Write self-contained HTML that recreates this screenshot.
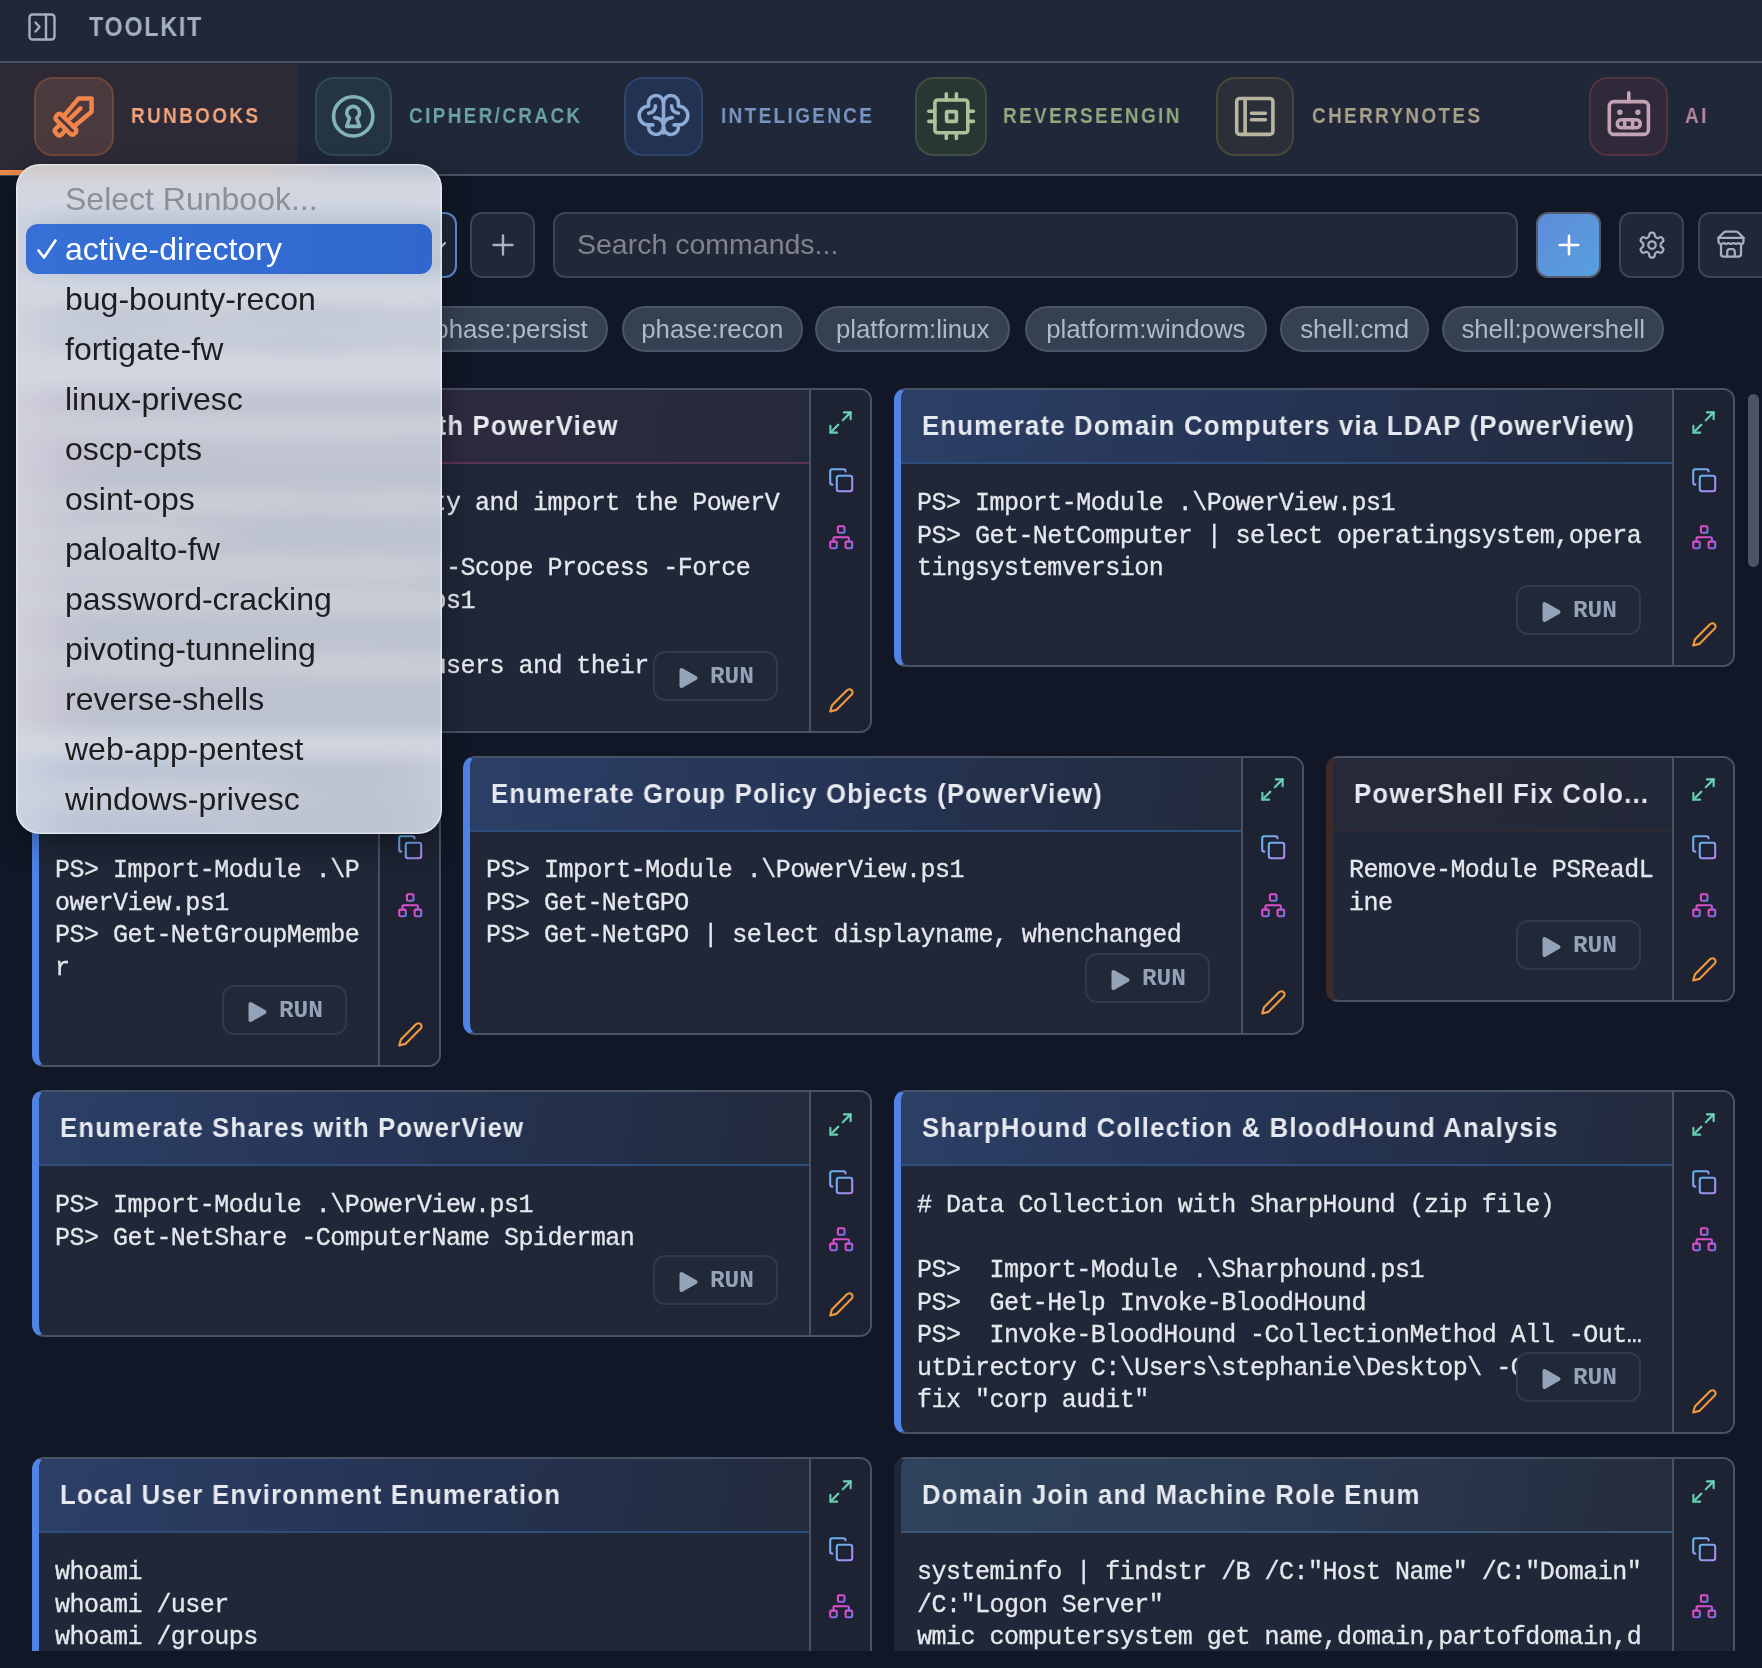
<!DOCTYPE html><html><head><meta charset="utf-8"><style>
*{box-sizing:border-box;margin:0;padding:0}
html,body{width:1762px;height:1668px;overflow:hidden;background:#111726;font-family:"Liberation Sans", sans-serif}
.abs{position:absolute}
#top{position:absolute;left:0;top:0;width:1762px;height:63px;background:#1f2738;border-bottom:2px solid #465366}
#tabs{position:absolute;left:0;top:63px;width:1762px;height:113px;background:#1f2738;border-bottom:2px solid #465366}
.tabtxt{will-change:transform;position:absolute;font-weight:bold;font-size:22px;line-height:26px;white-space:nowrap;letter-spacing:2.75px;transform:scaleX(0.86);transform-origin:0 0}
.ibox{position:absolute;border:2px solid;border-radius:19px}
.ibox svg{position:absolute;left:50%;top:50%;transform:translate(-50%,-50%)}
.btn{position:absolute;top:212px;height:66px;border:2px solid #3a4457;border-radius:12px;background:#1f2738}
.tag{will-change:transform;position:absolute;top:306px;height:46px;border:2px solid #4a5569;border-radius:23px;background:#354053;color:#aeb9ca;font-size:25.8px;line-height:42px;white-space:nowrap;padding:0 18px}
.card{position:absolute;border:2px solid #475265;border-radius:12px;background:#1f2738;overflow:hidden}
.card .hdr{position:absolute;left:0;top:0;height:74px}
.card .sep{position:absolute;left:0;top:72px;height:2px}
.card .ttl{position:absolute;left:21px;top:18px;font-weight:bold;font-size:27.6px;letter-spacing:1.33px;line-height:36px;color:#e6e9ef;white-space:nowrap;will-change:transform;transform:scaleX(0.93);transform-origin:0 0}
.card .act{position:absolute;right:0;top:0;bottom:0;width:61px;background:#1d2332;border-left:2px solid #475265}
.card .act svg{position:absolute}
.code{position:absolute;left:16.2px;top:97.6px;font-family:"Liberation Mono", monospace;font-size:25px;letter-spacing:-0.52px;line-height:32.5px;color:#e4e7ec;-webkit-text-stroke:0.3px #e4e7ec;white-space:pre;will-change:transform}
.run{position:absolute;width:125px;height:50px;border:2px solid #313a4c;border-radius:12px;background:#212838;will-change:transform}
.run svg{position:absolute;left:23px;top:13px}
.run span{position:absolute;left:55px;top:11px;font-family:"Liberation Mono", monospace;font-weight:bold;font-size:24.5px;letter-spacing:-0.1px;line-height:26px;color:#94a3b8}
#dd{position:absolute;left:16px;top:164px;width:426px;height:670px;border-radius:24px;overflow:hidden;box-shadow:0 10px 30px rgba(0,0,0,0.35);background:#c4c8d2}
#dd .bw{position:absolute;left:-16px;top:-164px;width:1762px;height:1668px;filter:url(#ddblur) saturate(1.7)}
#dd .ov{position:absolute;left:0;top:0;width:426px;height:670px;border-radius:24px;background:rgba(212,216,226,0.88);box-shadow:inset 0 0 0 1.5px rgba(255,255,255,0.5)}
#dd .it{will-change:transform;position:absolute;left:49px;font-size:32px;line-height:50px;height:50px;color:#1d1d1f;white-space:nowrap}
#dd .hl{position:absolute;left:10px;top:60px;width:406px;height:50px;border-radius:12px;background:linear-gradient(90deg,#3670d6,#2f67cf)}
</style></head><body><svg width="0" height="0" style="position:absolute"><defs>
<filter id="ddblur" x="-5%" y="-5%" width="110%" height="110%"><feGaussianBlur stdDeviation="30 8" edgeMode="duplicate"/></filter>
<linearGradient id="gTeal" x1="0" y1="1" x2="1" y2="0"><stop offset="0" stop-color="#5ec9a8"/><stop offset="1" stop-color="#6fd3bf"/></linearGradient>
<linearGradient id="gCopy" x1="0" y1="0" x2="1" y2="1"><stop offset="0" stop-color="#5bb8ea"/><stop offset="1" stop-color="#b583f0"/></linearGradient>
<linearGradient id="gNet" x1="0" y1="0" x2="1" y2="1"><stop offset="0" stop-color="#e84fc8"/><stop offset="0.6" stop-color="#c64fd0"/><stop offset="1" stop-color="#4f86f0"/></linearGradient>
<linearGradient id="gPen" x1="0" y1="0" x2="1" y2="1"><stop offset="0" stop-color="#f2a83e"/><stop offset="1" stop-color="#ee8a3c"/></linearGradient>
</defs></svg><div id="top">
<svg class="abs" style="left:27px;top:12px" width="30" height="30" viewBox="0 0 30 30" fill="none" stroke="#a3afc2" stroke-width="2.4" stroke-linecap="round" stroke-linejoin="round"><rect x="2.5" y="2.5" width="25" height="25" rx="3"/><line x1="19" y1="2.5" x2="19" y2="27.5"/><polyline points="8.5,10.5 12.5,15 8.5,19.5"/></svg>
<div class="abs" style="left:89px;top:12.5px;font-size:27px;font-weight:bold;line-height:28px;color:#a3afc2;letter-spacing:2.1px;transform:scaleX(0.86);transform-origin:0 0;will-change:transform">TOOLKIT</div>
</div>
<div id="tabs">
<div class="abs" style="left:0;top:0;width:297px;height:111px;background:linear-gradient(180deg,#2d2a36,#2c2b37)"></div>
<div class="abs" style="left:0;top:107px;width:297px;height:5px;background:#ef8a4a"></div>
<div class="ibox" style="left:34px;top:14px;width:80px;height:79px;background:#4b3a3d;border-color:#6e4739"></div>
<svg class="abs" style="left:34px;top:14px" width="80" height="80" viewBox="0 0 80 80" fill="none" stroke="#f0844a" stroke-width="3.6" stroke-linecap="round" stroke-linejoin="round"><g transform="translate(31.9,47.25) rotate(-45)" stroke-width="4.5"><path d="M3.7,-7.2 L27,-9.3 L36.3,0 L27,9.3 L3.7,7.2"/><path d="M7.5,-1.2 L21.5,-1"/><rect x="-3.7" y="-12.75" width="7.4" height="25.5" rx="3"/><rect x="-13.3" y="-4.1" width="9.6" height="8.2" rx="2.5"/></g></svg>
<div class="tabtxt" style="left:130.5px;top:39.5px;color:#f4a47a">RUNBOOKS</div>
<div class="ibox" style="left:315px;top:14px;width:77px;height:79px;background:#243443;border-color:#2f4c58"></div>
<svg class="abs" style="left:315px;top:14px" width="80" height="80" viewBox="0 0 80 80" fill="none" stroke="#80b4ba" stroke-width="3.6" stroke-linecap="round" stroke-linejoin="round"><circle cx="38.2" cy="39.4" r="19.6"/><path d="M34.5 41 A6.4 6.4 0 1 1 41.8 41 L44.7 49.4 H31.7 Z"/></svg>
<div class="tabtxt" style="left:408.5px;top:39.5px;color:#6ca4a6">CIPHER/CRACK</div>
<div class="ibox" style="left:624px;top:14px;width:79px;height:79px;background:#233250;border-color:#2e466c"></div>
<svg class="abs" style="left:624px;top:14px" width="80" height="80" viewBox="0 0 80 80" fill="none" stroke="#8eaad6" stroke-width="3.6" stroke-linecap="round" stroke-linejoin="round"><g id="brL"><path d="M39.5 25.5 A7.5 7.5 0 0 0 24.5 26.5 L24.5 29.2 A9 9 0 0 0 24.5 47.9 L28.9 47.9 M24.5 47.9 L24.5 49.6 A7.5 7.5 0 0 0 39.5 50.4"/><path d="M31.4 28.8 Q31.4 35.6 24.6 36.2"/><path d="M30.7 40.6 Q37.8 41.2 39.5 47.2"/></g><use href="#brL" transform="translate(79,0) scale(-1,1)"/><path d="M39.5 24 V56"/></svg>
<div class="tabtxt" style="left:720.5px;top:39.5px;color:#7896c4">INTELIGENCE</div>
<div class="ibox" style="left:915px;top:14px;width:72px;height:79px;background:#293733;border-color:#3d5040"></div>
<svg class="abs" style="left:912px;top:14px" width="80" height="80" viewBox="0 0 80 80" fill="none" stroke="#abc29b" stroke-width="3.6" stroke-linecap="round" stroke-linejoin="round"><rect x="22.9" y="23" width="32.9" height="32.8" rx="2.5"/><rect x="34.6" y="34.6" width="9.8" height="9.8" rx="1"/><path d="M34.3 16.8v6.2M44.4 16.8v6.2M34.3 55.8v5.6M44.4 55.8v5.6M16.8 34.3h6.1M16.8 44.4h6.1M55.8 34.3h5.6M55.8 44.4h5.6"/></svg>
<div class="tabtxt" style="left:1002.5px;top:39.5px;color:#90a97e">REVERSEENGIN</div>
<div class="ibox" style="left:1216px;top:14px;width:78px;height:79px;background:#2b3038;border-color:#48473a"></div>
<svg class="abs" style="left:1215px;top:14px" width="80" height="80" viewBox="0 0 80 80" fill="none" stroke="#b9b5a1" stroke-width="3.6" stroke-linecap="round" stroke-linejoin="round"><rect x="21.7" y="21.5" width="36.2" height="35.9" rx="3"/><path d="M30.1 21.5v35.9M36.5 36.2h13.9M36.5 42.8h13.9"/></svg>
<div class="tabtxt" style="left:1311.5px;top:39.5px;color:#a8a288">CHERRYNOTES</div>
<div class="ibox" style="left:1589px;top:14px;width:79px;height:79px;background:#30293a;border-color:#51343f"></div>
<svg class="abs" style="left:1589px;top:14px" width="80" height="80" viewBox="0 0 80 80" fill="none" stroke="#c3a2b3" stroke-width="3.6" stroke-linecap="round" stroke-linejoin="round"><rect x="20.3" y="24.6" width="39.1" height="32.8" rx="4.5"/><path d="M39.8 15.8v8.8"/><circle cx="30.9" cy="35.3" r="1.2" stroke-width="3"/><circle cx="48.9" cy="35.3" r="1.2" stroke-width="3"/><rect x="28.3" y="42.7" width="23" height="8.1" rx="4.05"/><path d="M35.7 42.7v8.1M43.6 42.7v8.1"/></svg>
<div class="tabtxt" style="left:1685px;top:39.5px;color:#b9869c">AI</div>
</div>
<div class="btn" style="left:33px;width:424px;border-color:#5b8fd6"><svg class="abs" style="left:392px;top:20px" width="24" height="24" viewBox="0 0 24 24" fill="none" stroke="#c9d1dc" stroke-width="2.2" stroke-linecap="round" stroke-linejoin="round"><path d="M6 9l6 6 6-6"/></svg></div>
<div class="btn" style="left:470px;width:65px"><svg class="abs" style="left:18px;top:18px" width="26" height="26" viewBox="0 0 26 26" stroke="#a8b2c1" stroke-width="2.4" stroke-linecap="round"><path d="M13 3.5v19M3.5 13h19"/></svg></div>
<div class="btn" style="left:553px;width:965px"><div class="abs" style="left:21.5px;top:13.5px;font-size:28.5px;line-height:32px;color:#818389;will-change:transform">Search commands...</div></div>
<div class="btn" style="left:1536px;width:65px;background:linear-gradient(135deg,#5f8bd9,#57a0df);border-color:#535c6c"><svg class="abs" style="left:18px;top:18px" width="26" height="26" viewBox="0 0 26 26" stroke="#ffffff" stroke-width="2.6" stroke-linecap="round"><path d="M13 3.8v18.4M3.8 13h18.4"/></svg></div>
<div class="btn" style="left:1619px;width:65px"><svg class="abs" style="left:16px;top:16px" width="30" height="30" viewBox="0 0 24 24" fill="none" stroke="#a6b0bf" stroke-width="1.8" stroke-linecap="round" stroke-linejoin="round"><path d="M12.22 2h-.44a2 2 0 0 0-2 2v.18a2 2 0 0 1-1 1.73l-.43.25a2 2 0 0 1-2 0l-.15-.08a2 2 0 0 0-2.73.73l-.22.38a2 2 0 0 0 .73 2.73l.15.1a2 2 0 0 1 1 1.72v.51a2 2 0 0 1-1 1.74l-.15.09a2 2 0 0 0-.73 2.73l.22.38a2 2 0 0 0 2.73.73l.15-.08a2 2 0 0 1 2 0l.43.25a2 2 0 0 1 1 1.73V20a2 2 0 0 0 2 2h.44a2 2 0 0 0 2-2v-.18a2 2 0 0 1 1-1.73l.43-.25a2 2 0 0 1 2 0l.15.08a2 2 0 0 0 2.73-.73l.22-.39a2 2 0 0 0-.73-2.73l-.15-.08a2 2 0 0 1-1-1.74v-.5a2 2 0 0 1 1-1.74l.15-.09a2 2 0 0 0 .73-2.73l-.22-.38a2 2 0 0 0-2.73-.73l-.15.08a2 2 0 0 1-2 0l-.43-.25a2 2 0 0 1-1-1.73V4a2 2 0 0 0-2-2z"/><circle cx="12" cy="12" r="3"/></svg></div>
<div class="btn" style="left:1698px;width:80px"><svg class="abs" style="left:16px;top:15px" width="30" height="30" viewBox="0 0 24 24" fill="none" stroke="#a6b0bf" stroke-width="1.8" stroke-linecap="round" stroke-linejoin="round"><path d="m2 7 4.41-4.41A2 2 0 0 1 7.83 2h8.34a2 2 0 0 1 1.42.59L22 7"/><path d="M4 12v8a2 2 0 0 0 2 2h12a2 2 0 0 0 2-2v-8"/><path d="M15 22v-4a2 2 0 0 0-2-2h-2a2 2 0 0 0-2 2v4"/><path d="M2 7h20"/><path d="M22 7v3a2 2 0 0 1-2 2a2.7 2.7 0 0 1-1.59-.63.7.7 0 0 0-.82 0A2.7 2.7 0 0 1 16 12a2.7 2.7 0 0 1-1.59-.63.7.7 0 0 0-.82 0A2.7 2.7 0 0 1 12 12a2.7 2.7 0 0 1-1.59-.63.7.7 0 0 0-.82 0A2.7 2.7 0 0 1 8 12a2.7 2.7 0 0 1-1.59-.63.7.7 0 0 0-.82 0A2.7 2.7 0 0 1 4 12a2 2 0 0 1-2-2V7"/></svg></div>
<div class="tag" style="left:33px;width:168px;text-align:center;padding:0">phase:access</div>
<div class="tag" style="left:215px;width:185px;text-align:center;padding:0">phase:exploit</div>
<div class="tag" style="left:414px;width:194px;text-align:center;padding:0">phase:persist</div>
<div class="tag" style="left:621.5px;width:180.5px;text-align:center;padding:0">phase:recon</div>
<div class="tag" style="left:815.2px;width:195.3px;text-align:center;padding:0">platform:linux</div>
<div class="tag" style="left:1024.8px;width:241.6px;text-align:center;padding:0">platform:windows</div>
<div class="tag" style="left:1279.6px;width:149.4px;text-align:center;padding:0">shell:cmd</div>
<div class="tag" style="left:1441.9px;width:222.3px;text-align:center;padding:0">shell:powershell</div>
<div class="card" style="left:32px;top:388px;width:840px;height:345px;border-left:7px solid #c0508a">
<div class="hdr" style="width:770px;background:linear-gradient(100deg,#3a2a44 0%,#2f2a40 45%,#252a3b 100%)"></div>
<div class="sep" style="width:770px;background:#5a3552"></div>
<div class="ttl">Enumerate Domain Users with PowerView</div>
<div class="code"># Drop PowerShell&#x27;s security and import the PowerV
iew module
Set-ExecutionPolicy Bypass -Scope Process -Force
Import-Module .\PowerView.ps1

# Retrieve all the domain users and their groups</div>
<div class="run" style="left:614px;bottom:30px"><svg width="22" height="24" viewBox="0 0 22 24"><path d="M3.5 4 L17.5 12 L3.5 20 Z" fill="#94a3b8" stroke="#94a3b8" stroke-width="4" stroke-linejoin="round"/></svg><span>RUN</span></div>
<div class="act">
<svg style="left:16px;top:18.6px" width="27" height="27" viewBox="0 0 24 24" fill="none" stroke="url(#gTeal)" stroke-width="1.9" stroke-linecap="round" stroke-linejoin="round"><path d="M15 3h6v6"/><path d="M9 21H3v-6"/><path d="M21 3l-7 7"/><path d="M3 21l7-7"/></svg>
<svg style="left:16.9px;top:76.8px" width="26.4" height="26.4" viewBox="0 0 24 24" fill="none" stroke="url(#gCopy)" stroke-width="1.9" stroke-linecap="round" stroke-linejoin="round"><rect x="8" y="8" width="14" height="14" rx="2"/><path d="M4 16c-1.1 0-2-.9-2-2V4c0-1.1.9-2 2-2h10c1.1 0 2 .9 2 2"/></svg>
<svg style="left:16.9px;top:134.4px" width="26.4" height="26.4" viewBox="0 0 24 24" fill="none" stroke="url(#gNet)" stroke-width="1.9" stroke-linecap="round" stroke-linejoin="round"><rect x="16" y="16" width="6" height="6" rx="1"/><rect x="2" y="16" width="6" height="6" rx="1"/><rect x="9" y="2" width="6" height="6" rx="1"/><path d="M5 16v-3a1 1 0 0 1 1-1h12a1 1 0 0 1 1 1v3"/><path d="M12 12V8"/></svg>
<svg style="left:16.5px;bottom:16.9px" width="26.8" height="26.8" viewBox="0 0 24 24" fill="none" stroke="url(#gPen)" stroke-width="1.9" stroke-linecap="round" stroke-linejoin="round"><path d="M17 3a2.85 2.83 0 1 1 4 4L7.5 20.5 2 22l1.5-5.5Z"/></svg>
</div>
</div>
<div class="card" style="left:894px;top:388px;width:841px;height:279px;border-left:7px solid #4f83e6">
<div class="hdr" style="width:771px;background:linear-gradient(100deg,#2c3f66 0%,#263556 45%,#222a3c 100%)"></div>
<div class="sep" style="width:771px;background:#2f4d7a"></div>
<div class="ttl">Enumerate Domain Computers via LDAP (PowerView)</div>
<div class="code">PS&gt; Import-Module .\PowerView.ps1
PS&gt; Get-NetComputer | select operatingsystem,opera
tingsystemversion</div>
<div class="run" style="left:615px;bottom:30px"><svg width="22" height="24" viewBox="0 0 22 24"><path d="M3.5 4 L17.5 12 L3.5 20 Z" fill="#94a3b8" stroke="#94a3b8" stroke-width="4" stroke-linejoin="round"/></svg><span>RUN</span></div>
<div class="act">
<svg style="left:16px;top:18.6px" width="27" height="27" viewBox="0 0 24 24" fill="none" stroke="url(#gTeal)" stroke-width="1.9" stroke-linecap="round" stroke-linejoin="round"><path d="M15 3h6v6"/><path d="M9 21H3v-6"/><path d="M21 3l-7 7"/><path d="M3 21l7-7"/></svg>
<svg style="left:16.9px;top:76.8px" width="26.4" height="26.4" viewBox="0 0 24 24" fill="none" stroke="url(#gCopy)" stroke-width="1.9" stroke-linecap="round" stroke-linejoin="round"><rect x="8" y="8" width="14" height="14" rx="2"/><path d="M4 16c-1.1 0-2-.9-2-2V4c0-1.1.9-2 2-2h10c1.1 0 2 .9 2 2"/></svg>
<svg style="left:16.9px;top:134.4px" width="26.4" height="26.4" viewBox="0 0 24 24" fill="none" stroke="url(#gNet)" stroke-width="1.9" stroke-linecap="round" stroke-linejoin="round"><rect x="16" y="16" width="6" height="6" rx="1"/><rect x="2" y="16" width="6" height="6" rx="1"/><rect x="9" y="2" width="6" height="6" rx="1"/><path d="M5 16v-3a1 1 0 0 1 1-1h12a1 1 0 0 1 1 1v3"/><path d="M12 12V8"/></svg>
<svg style="left:16.5px;bottom:16.9px" width="26.8" height="26.8" viewBox="0 0 24 24" fill="none" stroke="url(#gPen)" stroke-width="1.9" stroke-linecap="round" stroke-linejoin="round"><path d="M17 3a2.85 2.83 0 1 1 4 4L7.5 20.5 2 22l1.5-5.5Z"/></svg>
</div>
</div>
<div class="card" style="left:32px;top:755.5px;width:409px;height:311.5px;border-left:7px solid #4f83e6">
<div class="hdr" style="width:339px;background:linear-gradient(100deg,#2c3f66 0%,#263556 45%,#222a3c 100%)"></div>
<div class="sep" style="width:339px;background:#2f4d7a"></div>
<div class="ttl">Enumerate Gro...</div>
<div class="code">PS&gt; Import-Module .\P
owerView.ps1
PS&gt; Get-NetGroupMembe
r</div>
<div class="run" style="left:183px;bottom:30px"><svg width="22" height="24" viewBox="0 0 22 24"><path d="M3.5 4 L17.5 12 L3.5 20 Z" fill="#94a3b8" stroke="#94a3b8" stroke-width="4" stroke-linejoin="round"/></svg><span>RUN</span></div>
<div class="act">
<svg style="left:16px;top:18.6px" width="27" height="27" viewBox="0 0 24 24" fill="none" stroke="url(#gTeal)" stroke-width="1.9" stroke-linecap="round" stroke-linejoin="round"><path d="M15 3h6v6"/><path d="M9 21H3v-6"/><path d="M21 3l-7 7"/><path d="M3 21l7-7"/></svg>
<svg style="left:16.9px;top:76.8px" width="26.4" height="26.4" viewBox="0 0 24 24" fill="none" stroke="url(#gCopy)" stroke-width="1.9" stroke-linecap="round" stroke-linejoin="round"><rect x="8" y="8" width="14" height="14" rx="2"/><path d="M4 16c-1.1 0-2-.9-2-2V4c0-1.1.9-2 2-2h10c1.1 0 2 .9 2 2"/></svg>
<svg style="left:16.9px;top:134.4px" width="26.4" height="26.4" viewBox="0 0 24 24" fill="none" stroke="url(#gNet)" stroke-width="1.9" stroke-linecap="round" stroke-linejoin="round"><rect x="16" y="16" width="6" height="6" rx="1"/><rect x="2" y="16" width="6" height="6" rx="1"/><rect x="9" y="2" width="6" height="6" rx="1"/><path d="M5 16v-3a1 1 0 0 1 1-1h12a1 1 0 0 1 1 1v3"/><path d="M12 12V8"/></svg>
<svg style="left:16.5px;bottom:16.9px" width="26.8" height="26.8" viewBox="0 0 24 24" fill="none" stroke="url(#gPen)" stroke-width="1.9" stroke-linecap="round" stroke-linejoin="round"><path d="M17 3a2.85 2.83 0 1 1 4 4L7.5 20.5 2 22l1.5-5.5Z"/></svg>
</div>
</div>
<div class="card" style="left:463px;top:755.5px;width:841px;height:279.5px;border-left:7px solid #4f83e6">
<div class="hdr" style="width:771px;background:linear-gradient(100deg,#2c3f66 0%,#263556 45%,#222a3c 100%)"></div>
<div class="sep" style="width:771px;background:#2f4d7a"></div>
<div class="ttl">Enumerate Group Policy Objects (PowerView)</div>
<div class="code">PS&gt; Import-Module .\PowerView.ps1
PS&gt; Get-NetGPO
PS&gt; Get-NetGPO | select displayname, whenchanged</div>
<div class="run" style="left:615px;bottom:30px"><svg width="22" height="24" viewBox="0 0 22 24"><path d="M3.5 4 L17.5 12 L3.5 20 Z" fill="#94a3b8" stroke="#94a3b8" stroke-width="4" stroke-linejoin="round"/></svg><span>RUN</span></div>
<div class="act">
<svg style="left:16px;top:18.6px" width="27" height="27" viewBox="0 0 24 24" fill="none" stroke="url(#gTeal)" stroke-width="1.9" stroke-linecap="round" stroke-linejoin="round"><path d="M15 3h6v6"/><path d="M9 21H3v-6"/><path d="M21 3l-7 7"/><path d="M3 21l7-7"/></svg>
<svg style="left:16.9px;top:76.8px" width="26.4" height="26.4" viewBox="0 0 24 24" fill="none" stroke="url(#gCopy)" stroke-width="1.9" stroke-linecap="round" stroke-linejoin="round"><rect x="8" y="8" width="14" height="14" rx="2"/><path d="M4 16c-1.1 0-2-.9-2-2V4c0-1.1.9-2 2-2h10c1.1 0 2 .9 2 2"/></svg>
<svg style="left:16.9px;top:134.4px" width="26.4" height="26.4" viewBox="0 0 24 24" fill="none" stroke="url(#gNet)" stroke-width="1.9" stroke-linecap="round" stroke-linejoin="round"><rect x="16" y="16" width="6" height="6" rx="1"/><rect x="2" y="16" width="6" height="6" rx="1"/><rect x="9" y="2" width="6" height="6" rx="1"/><path d="M5 16v-3a1 1 0 0 1 1-1h12a1 1 0 0 1 1 1v3"/><path d="M12 12V8"/></svg>
<svg style="left:16.5px;bottom:16.9px" width="26.8" height="26.8" viewBox="0 0 24 24" fill="none" stroke="url(#gPen)" stroke-width="1.9" stroke-linecap="round" stroke-linejoin="round"><path d="M17 3a2.85 2.83 0 1 1 4 4L7.5 20.5 2 22l1.5-5.5Z"/></svg>
</div>
</div>
<div class="card" style="left:1326px;top:755.5px;width:409px;height:246px;border-left:7px solid #3e2a2a">
<div class="hdr" style="width:339px;background:linear-gradient(100deg,#262a38,#232838)"></div>
<div class="sep" style="width:339px;background:#2e2a33"></div>
<div class="ttl">PowerShell Fix Colo...</div>
<div class="code">Remove-Module PSReadL
ine</div>
<div class="run" style="left:183px;bottom:30px"><svg width="22" height="24" viewBox="0 0 22 24"><path d="M3.5 4 L17.5 12 L3.5 20 Z" fill="#94a3b8" stroke="#94a3b8" stroke-width="4" stroke-linejoin="round"/></svg><span>RUN</span></div>
<div class="act">
<svg style="left:16px;top:18.6px" width="27" height="27" viewBox="0 0 24 24" fill="none" stroke="url(#gTeal)" stroke-width="1.9" stroke-linecap="round" stroke-linejoin="round"><path d="M15 3h6v6"/><path d="M9 21H3v-6"/><path d="M21 3l-7 7"/><path d="M3 21l7-7"/></svg>
<svg style="left:16.9px;top:76.8px" width="26.4" height="26.4" viewBox="0 0 24 24" fill="none" stroke="url(#gCopy)" stroke-width="1.9" stroke-linecap="round" stroke-linejoin="round"><rect x="8" y="8" width="14" height="14" rx="2"/><path d="M4 16c-1.1 0-2-.9-2-2V4c0-1.1.9-2 2-2h10c1.1 0 2 .9 2 2"/></svg>
<svg style="left:16.9px;top:134.4px" width="26.4" height="26.4" viewBox="0 0 24 24" fill="none" stroke="url(#gNet)" stroke-width="1.9" stroke-linecap="round" stroke-linejoin="round"><rect x="16" y="16" width="6" height="6" rx="1"/><rect x="2" y="16" width="6" height="6" rx="1"/><rect x="9" y="2" width="6" height="6" rx="1"/><path d="M5 16v-3a1 1 0 0 1 1-1h12a1 1 0 0 1 1 1v3"/><path d="M12 12V8"/></svg>
<svg style="left:16.5px;bottom:16.9px" width="26.8" height="26.8" viewBox="0 0 24 24" fill="none" stroke="url(#gPen)" stroke-width="1.9" stroke-linecap="round" stroke-linejoin="round"><path d="M17 3a2.85 2.83 0 1 1 4 4L7.5 20.5 2 22l1.5-5.5Z"/></svg>
</div>
</div>
<div class="card" style="left:32px;top:1090px;width:840px;height:247px;border-left:7px solid #4f83e6">
<div class="hdr" style="width:770px;background:linear-gradient(100deg,#2c3f66 0%,#263556 45%,#222a3c 100%)"></div>
<div class="sep" style="width:770px;background:#2f4d7a"></div>
<div class="ttl">Enumerate Shares with PowerView</div>
<div class="code">PS&gt; Import-Module .\PowerView.ps1
PS&gt; Get-NetShare -ComputerName Spiderman</div>
<div class="run" style="left:614px;bottom:30px"><svg width="22" height="24" viewBox="0 0 22 24"><path d="M3.5 4 L17.5 12 L3.5 20 Z" fill="#94a3b8" stroke="#94a3b8" stroke-width="4" stroke-linejoin="round"/></svg><span>RUN</span></div>
<div class="act">
<svg style="left:16px;top:18.6px" width="27" height="27" viewBox="0 0 24 24" fill="none" stroke="url(#gTeal)" stroke-width="1.9" stroke-linecap="round" stroke-linejoin="round"><path d="M15 3h6v6"/><path d="M9 21H3v-6"/><path d="M21 3l-7 7"/><path d="M3 21l7-7"/></svg>
<svg style="left:16.9px;top:76.8px" width="26.4" height="26.4" viewBox="0 0 24 24" fill="none" stroke="url(#gCopy)" stroke-width="1.9" stroke-linecap="round" stroke-linejoin="round"><rect x="8" y="8" width="14" height="14" rx="2"/><path d="M4 16c-1.1 0-2-.9-2-2V4c0-1.1.9-2 2-2h10c1.1 0 2 .9 2 2"/></svg>
<svg style="left:16.9px;top:134.4px" width="26.4" height="26.4" viewBox="0 0 24 24" fill="none" stroke="url(#gNet)" stroke-width="1.9" stroke-linecap="round" stroke-linejoin="round"><rect x="16" y="16" width="6" height="6" rx="1"/><rect x="2" y="16" width="6" height="6" rx="1"/><rect x="9" y="2" width="6" height="6" rx="1"/><path d="M5 16v-3a1 1 0 0 1 1-1h12a1 1 0 0 1 1 1v3"/><path d="M12 12V8"/></svg>
<svg style="left:16.5px;bottom:16.9px" width="26.8" height="26.8" viewBox="0 0 24 24" fill="none" stroke="url(#gPen)" stroke-width="1.9" stroke-linecap="round" stroke-linejoin="round"><path d="M17 3a2.85 2.83 0 1 1 4 4L7.5 20.5 2 22l1.5-5.5Z"/></svg>
</div>
</div>
<div class="card" style="left:894px;top:1090px;width:841px;height:344px;border-left:7px solid #4f83e6">
<div class="hdr" style="width:771px;background:linear-gradient(100deg,#2c3f66 0%,#263556 45%,#222a3c 100%)"></div>
<div class="sep" style="width:771px;background:#2f4d7a"></div>
<div class="ttl">SharpHound Collection &amp; BloodHound Analysis</div>
<div class="code"># Data Collection with SharpHound (zip file)

PS&gt;  Import-Module .\Sharphound.ps1
PS&gt;  Get-Help Invoke-BloodHound
PS&gt;  Invoke-BloodHound -CollectionMethod All -Out…
utDirectory C:\Users\stephanie\Desktop\ -OutputPre
fix &quot;corp audit&quot;</div>
<div class="run" style="left:615px;bottom:30px"><svg width="22" height="24" viewBox="0 0 22 24"><path d="M3.5 4 L17.5 12 L3.5 20 Z" fill="#94a3b8" stroke="#94a3b8" stroke-width="4" stroke-linejoin="round"/></svg><span>RUN</span></div>
<div class="act">
<svg style="left:16px;top:18.6px" width="27" height="27" viewBox="0 0 24 24" fill="none" stroke="url(#gTeal)" stroke-width="1.9" stroke-linecap="round" stroke-linejoin="round"><path d="M15 3h6v6"/><path d="M9 21H3v-6"/><path d="M21 3l-7 7"/><path d="M3 21l7-7"/></svg>
<svg style="left:16.9px;top:76.8px" width="26.4" height="26.4" viewBox="0 0 24 24" fill="none" stroke="url(#gCopy)" stroke-width="1.9" stroke-linecap="round" stroke-linejoin="round"><rect x="8" y="8" width="14" height="14" rx="2"/><path d="M4 16c-1.1 0-2-.9-2-2V4c0-1.1.9-2 2-2h10c1.1 0 2 .9 2 2"/></svg>
<svg style="left:16.9px;top:134.4px" width="26.4" height="26.4" viewBox="0 0 24 24" fill="none" stroke="url(#gNet)" stroke-width="1.9" stroke-linecap="round" stroke-linejoin="round"><rect x="16" y="16" width="6" height="6" rx="1"/><rect x="2" y="16" width="6" height="6" rx="1"/><rect x="9" y="2" width="6" height="6" rx="1"/><path d="M5 16v-3a1 1 0 0 1 1-1h12a1 1 0 0 1 1 1v3"/><path d="M12 12V8"/></svg>
<svg style="left:16.5px;bottom:16.9px" width="26.8" height="26.8" viewBox="0 0 24 24" fill="none" stroke="url(#gPen)" stroke-width="1.9" stroke-linecap="round" stroke-linejoin="round"><path d="M17 3a2.85 2.83 0 1 1 4 4L7.5 20.5 2 22l1.5-5.5Z"/></svg>
</div>
</div>
<div class="card" style="left:32px;top:1457px;width:840px;height:320px;border-left:7px solid #4f83e6">
<div class="hdr" style="width:770px;background:linear-gradient(100deg,#2c3f66 0%,#263556 45%,#222a3c 100%)"></div>
<div class="sep" style="width:770px;background:#2f4d7a"></div>
<div class="ttl">Local User Environment Enumeration</div>
<div class="code">whoami
whoami /user
whoami /groups</div>
<div class="run" style="left:614px;bottom:30px"><svg width="22" height="24" viewBox="0 0 22 24"><path d="M3.5 4 L17.5 12 L3.5 20 Z" fill="#94a3b8" stroke="#94a3b8" stroke-width="4" stroke-linejoin="round"/></svg><span>RUN</span></div>
<div class="act">
<svg style="left:16px;top:18.6px" width="27" height="27" viewBox="0 0 24 24" fill="none" stroke="url(#gTeal)" stroke-width="1.9" stroke-linecap="round" stroke-linejoin="round"><path d="M15 3h6v6"/><path d="M9 21H3v-6"/><path d="M21 3l-7 7"/><path d="M3 21l7-7"/></svg>
<svg style="left:16.9px;top:76.8px" width="26.4" height="26.4" viewBox="0 0 24 24" fill="none" stroke="url(#gCopy)" stroke-width="1.9" stroke-linecap="round" stroke-linejoin="round"><rect x="8" y="8" width="14" height="14" rx="2"/><path d="M4 16c-1.1 0-2-.9-2-2V4c0-1.1.9-2 2-2h10c1.1 0 2 .9 2 2"/></svg>
<svg style="left:16.9px;top:134.4px" width="26.4" height="26.4" viewBox="0 0 24 24" fill="none" stroke="url(#gNet)" stroke-width="1.9" stroke-linecap="round" stroke-linejoin="round"><rect x="16" y="16" width="6" height="6" rx="1"/><rect x="2" y="16" width="6" height="6" rx="1"/><rect x="9" y="2" width="6" height="6" rx="1"/><path d="M5 16v-3a1 1 0 0 1 1-1h12a1 1 0 0 1 1 1v3"/><path d="M12 12V8"/></svg>
<svg style="left:16.5px;bottom:16.9px" width="26.8" height="26.8" viewBox="0 0 24 24" fill="none" stroke="url(#gPen)" stroke-width="1.9" stroke-linecap="round" stroke-linejoin="round"><path d="M17 3a2.85 2.83 0 1 1 4 4L7.5 20.5 2 22l1.5-5.5Z"/></svg>
</div>
</div>
<div class="card" style="left:894px;top:1457px;width:841px;height:320px;border-left:7px solid #1f2638">
<div class="hdr" style="width:771px;background:linear-gradient(100deg,#2f435c 0%,#2c3c55 45%,#242c3d 100%)"></div>
<div class="sep" style="width:771px;background:#3b5676"></div>
<div class="ttl">Domain Join and Machine Role Enum</div>
<div class="code">systeminfo | findstr /B /C:&quot;Host Name&quot; /C:&quot;Domain&quot;
/C:&quot;Logon Server&quot;
wmic computersystem get name,domain,partofdomain,d</div>
<div class="run" style="left:615px;bottom:30px"><svg width="22" height="24" viewBox="0 0 22 24"><path d="M3.5 4 L17.5 12 L3.5 20 Z" fill="#94a3b8" stroke="#94a3b8" stroke-width="4" stroke-linejoin="round"/></svg><span>RUN</span></div>
<div class="act">
<svg style="left:16px;top:18.6px" width="27" height="27" viewBox="0 0 24 24" fill="none" stroke="url(#gTeal)" stroke-width="1.9" stroke-linecap="round" stroke-linejoin="round"><path d="M15 3h6v6"/><path d="M9 21H3v-6"/><path d="M21 3l-7 7"/><path d="M3 21l7-7"/></svg>
<svg style="left:16.9px;top:76.8px" width="26.4" height="26.4" viewBox="0 0 24 24" fill="none" stroke="url(#gCopy)" stroke-width="1.9" stroke-linecap="round" stroke-linejoin="round"><rect x="8" y="8" width="14" height="14" rx="2"/><path d="M4 16c-1.1 0-2-.9-2-2V4c0-1.1.9-2 2-2h10c1.1 0 2 .9 2 2"/></svg>
<svg style="left:16.9px;top:134.4px" width="26.4" height="26.4" viewBox="0 0 24 24" fill="none" stroke="url(#gNet)" stroke-width="1.9" stroke-linecap="round" stroke-linejoin="round"><rect x="16" y="16" width="6" height="6" rx="1"/><rect x="2" y="16" width="6" height="6" rx="1"/><rect x="9" y="2" width="6" height="6" rx="1"/><path d="M5 16v-3a1 1 0 0 1 1-1h12a1 1 0 0 1 1 1v3"/><path d="M12 12V8"/></svg>
<svg style="left:16.5px;bottom:16.9px" width="26.8" height="26.8" viewBox="0 0 24 24" fill="none" stroke="url(#gPen)" stroke-width="1.9" stroke-linecap="round" stroke-linejoin="round"><path d="M17 3a2.85 2.83 0 1 1 4 4L7.5 20.5 2 22l1.5-5.5Z"/></svg>
</div>
</div>
<div class="abs" style="left:0;top:1651px;width:1762px;height:17px;background:#111726"></div>
<div class="abs" style="left:1748px;top:394px;width:11px;height:173px;border-radius:6px;background:#4a5466"></div>
<div id="dd">
<div class="bw"><div id="top">
<svg class="abs" style="left:27px;top:12px" width="30" height="30" viewBox="0 0 30 30" fill="none" stroke="#a3afc2" stroke-width="2.4" stroke-linecap="round" stroke-linejoin="round"><rect x="2.5" y="2.5" width="25" height="25" rx="3"/><line x1="19" y1="2.5" x2="19" y2="27.5"/><polyline points="8.5,10.5 12.5,15 8.5,19.5"/></svg>
<div class="abs" style="left:89px;top:12.5px;font-size:27px;font-weight:bold;line-height:28px;color:#a3afc2;letter-spacing:2.1px;transform:scaleX(0.86);transform-origin:0 0;will-change:transform">TOOLKIT</div>
</div>
<div id="tabs">
<div class="abs" style="left:0;top:0;width:297px;height:111px;background:linear-gradient(180deg,#2d2a36,#2c2b37)"></div>
<div class="abs" style="left:0;top:107px;width:297px;height:5px;background:#ef8a4a"></div>
<div class="ibox" style="left:34px;top:14px;width:80px;height:79px;background:#4b3a3d;border-color:#6e4739"></div>
<svg class="abs" style="left:34px;top:14px" width="80" height="80" viewBox="0 0 80 80" fill="none" stroke="#f0844a" stroke-width="3.6" stroke-linecap="round" stroke-linejoin="round"><g transform="translate(31.9,47.25) rotate(-45)" stroke-width="4.5"><path d="M3.7,-7.2 L27,-9.3 L36.3,0 L27,9.3 L3.7,7.2"/><path d="M7.5,-1.2 L21.5,-1"/><rect x="-3.7" y="-12.75" width="7.4" height="25.5" rx="3"/><rect x="-13.3" y="-4.1" width="9.6" height="8.2" rx="2.5"/></g></svg>
<div class="tabtxt" style="left:130.5px;top:39.5px;color:#f4a47a">RUNBOOKS</div>
<div class="ibox" style="left:315px;top:14px;width:77px;height:79px;background:#243443;border-color:#2f4c58"></div>
<svg class="abs" style="left:315px;top:14px" width="80" height="80" viewBox="0 0 80 80" fill="none" stroke="#80b4ba" stroke-width="3.6" stroke-linecap="round" stroke-linejoin="round"><circle cx="38.2" cy="39.4" r="19.6"/><path d="M34.5 41 A6.4 6.4 0 1 1 41.8 41 L44.7 49.4 H31.7 Z"/></svg>
<div class="tabtxt" style="left:408.5px;top:39.5px;color:#6ca4a6">CIPHER/CRACK</div>
<div class="ibox" style="left:624px;top:14px;width:79px;height:79px;background:#233250;border-color:#2e466c"></div>
<svg class="abs" style="left:624px;top:14px" width="80" height="80" viewBox="0 0 80 80" fill="none" stroke="#8eaad6" stroke-width="3.6" stroke-linecap="round" stroke-linejoin="round"><g id="brL"><path d="M39.5 25.5 A7.5 7.5 0 0 0 24.5 26.5 L24.5 29.2 A9 9 0 0 0 24.5 47.9 L28.9 47.9 M24.5 47.9 L24.5 49.6 A7.5 7.5 0 0 0 39.5 50.4"/><path d="M31.4 28.8 Q31.4 35.6 24.6 36.2"/><path d="M30.7 40.6 Q37.8 41.2 39.5 47.2"/></g><use href="#brL" transform="translate(79,0) scale(-1,1)"/><path d="M39.5 24 V56"/></svg>
<div class="tabtxt" style="left:720.5px;top:39.5px;color:#7896c4">INTELIGENCE</div>
<div class="ibox" style="left:915px;top:14px;width:72px;height:79px;background:#293733;border-color:#3d5040"></div>
<svg class="abs" style="left:912px;top:14px" width="80" height="80" viewBox="0 0 80 80" fill="none" stroke="#abc29b" stroke-width="3.6" stroke-linecap="round" stroke-linejoin="round"><rect x="22.9" y="23" width="32.9" height="32.8" rx="2.5"/><rect x="34.6" y="34.6" width="9.8" height="9.8" rx="1"/><path d="M34.3 16.8v6.2M44.4 16.8v6.2M34.3 55.8v5.6M44.4 55.8v5.6M16.8 34.3h6.1M16.8 44.4h6.1M55.8 34.3h5.6M55.8 44.4h5.6"/></svg>
<div class="tabtxt" style="left:1002.5px;top:39.5px;color:#90a97e">REVERSEENGIN</div>
<div class="ibox" style="left:1216px;top:14px;width:78px;height:79px;background:#2b3038;border-color:#48473a"></div>
<svg class="abs" style="left:1215px;top:14px" width="80" height="80" viewBox="0 0 80 80" fill="none" stroke="#b9b5a1" stroke-width="3.6" stroke-linecap="round" stroke-linejoin="round"><rect x="21.7" y="21.5" width="36.2" height="35.9" rx="3"/><path d="M30.1 21.5v35.9M36.5 36.2h13.9M36.5 42.8h13.9"/></svg>
<div class="tabtxt" style="left:1311.5px;top:39.5px;color:#a8a288">CHERRYNOTES</div>
<div class="ibox" style="left:1589px;top:14px;width:79px;height:79px;background:#30293a;border-color:#51343f"></div>
<svg class="abs" style="left:1589px;top:14px" width="80" height="80" viewBox="0 0 80 80" fill="none" stroke="#c3a2b3" stroke-width="3.6" stroke-linecap="round" stroke-linejoin="round"><rect x="20.3" y="24.6" width="39.1" height="32.8" rx="4.5"/><path d="M39.8 15.8v8.8"/><circle cx="30.9" cy="35.3" r="1.2" stroke-width="3"/><circle cx="48.9" cy="35.3" r="1.2" stroke-width="3"/><rect x="28.3" y="42.7" width="23" height="8.1" rx="4.05"/><path d="M35.7 42.7v8.1M43.6 42.7v8.1"/></svg>
<div class="tabtxt" style="left:1685px;top:39.5px;color:#b9869c">AI</div>
</div>
<div class="btn" style="left:33px;width:424px;border-color:#5b8fd6"><svg class="abs" style="left:392px;top:20px" width="24" height="24" viewBox="0 0 24 24" fill="none" stroke="#c9d1dc" stroke-width="2.2" stroke-linecap="round" stroke-linejoin="round"><path d="M6 9l6 6 6-6"/></svg></div>
<div class="btn" style="left:470px;width:65px"><svg class="abs" style="left:18px;top:18px" width="26" height="26" viewBox="0 0 26 26" stroke="#a8b2c1" stroke-width="2.4" stroke-linecap="round"><path d="M13 3.5v19M3.5 13h19"/></svg></div>
<div class="btn" style="left:553px;width:965px"><div class="abs" style="left:21.5px;top:13.5px;font-size:28.5px;line-height:32px;color:#818389;will-change:transform">Search commands...</div></div>
<div class="btn" style="left:1536px;width:65px;background:linear-gradient(135deg,#5f8bd9,#57a0df);border-color:#535c6c"><svg class="abs" style="left:18px;top:18px" width="26" height="26" viewBox="0 0 26 26" stroke="#ffffff" stroke-width="2.6" stroke-linecap="round"><path d="M13 3.8v18.4M3.8 13h18.4"/></svg></div>
<div class="btn" style="left:1619px;width:65px"><svg class="abs" style="left:16px;top:16px" width="30" height="30" viewBox="0 0 24 24" fill="none" stroke="#a6b0bf" stroke-width="1.8" stroke-linecap="round" stroke-linejoin="round"><path d="M12.22 2h-.44a2 2 0 0 0-2 2v.18a2 2 0 0 1-1 1.73l-.43.25a2 2 0 0 1-2 0l-.15-.08a2 2 0 0 0-2.73.73l-.22.38a2 2 0 0 0 .73 2.73l.15.1a2 2 0 0 1 1 1.72v.51a2 2 0 0 1-1 1.74l-.15.09a2 2 0 0 0-.73 2.73l.22.38a2 2 0 0 0 2.73.73l.15-.08a2 2 0 0 1 2 0l.43.25a2 2 0 0 1 1 1.73V20a2 2 0 0 0 2 2h.44a2 2 0 0 0 2-2v-.18a2 2 0 0 1 1-1.73l.43-.25a2 2 0 0 1 2 0l.15.08a2 2 0 0 0 2.73-.73l.22-.39a2 2 0 0 0-.73-2.73l-.15-.08a2 2 0 0 1-1-1.74v-.5a2 2 0 0 1 1-1.74l.15-.09a2 2 0 0 0 .73-2.73l-.22-.38a2 2 0 0 0-2.73-.73l-.15.08a2 2 0 0 1-2 0l-.43-.25a2 2 0 0 1-1-1.73V4a2 2 0 0 0-2-2z"/><circle cx="12" cy="12" r="3"/></svg></div>
<div class="btn" style="left:1698px;width:80px"><svg class="abs" style="left:16px;top:15px" width="30" height="30" viewBox="0 0 24 24" fill="none" stroke="#a6b0bf" stroke-width="1.8" stroke-linecap="round" stroke-linejoin="round"><path d="m2 7 4.41-4.41A2 2 0 0 1 7.83 2h8.34a2 2 0 0 1 1.42.59L22 7"/><path d="M4 12v8a2 2 0 0 0 2 2h12a2 2 0 0 0 2-2v-8"/><path d="M15 22v-4a2 2 0 0 0-2-2h-2a2 2 0 0 0-2 2v4"/><path d="M2 7h20"/><path d="M22 7v3a2 2 0 0 1-2 2a2.7 2.7 0 0 1-1.59-.63.7.7 0 0 0-.82 0A2.7 2.7 0 0 1 16 12a2.7 2.7 0 0 1-1.59-.63.7.7 0 0 0-.82 0A2.7 2.7 0 0 1 12 12a2.7 2.7 0 0 1-1.59-.63.7.7 0 0 0-.82 0A2.7 2.7 0 0 1 8 12a2.7 2.7 0 0 1-1.59-.63.7.7 0 0 0-.82 0A2.7 2.7 0 0 1 4 12a2 2 0 0 1-2-2V7"/></svg></div>
<div class="tag" style="left:33px;width:168px;text-align:center;padding:0">phase:access</div>
<div class="tag" style="left:215px;width:185px;text-align:center;padding:0">phase:exploit</div>
<div class="tag" style="left:414px;width:194px;text-align:center;padding:0">phase:persist</div>
<div class="tag" style="left:621.5px;width:180.5px;text-align:center;padding:0">phase:recon</div>
<div class="tag" style="left:815.2px;width:195.3px;text-align:center;padding:0">platform:linux</div>
<div class="tag" style="left:1024.8px;width:241.6px;text-align:center;padding:0">platform:windows</div>
<div class="tag" style="left:1279.6px;width:149.4px;text-align:center;padding:0">shell:cmd</div>
<div class="tag" style="left:1441.9px;width:222.3px;text-align:center;padding:0">shell:powershell</div>
<div class="card" style="left:32px;top:388px;width:840px;height:345px;border-left:7px solid #c0508a">
<div class="hdr" style="width:770px;background:linear-gradient(100deg,#3a2a44 0%,#2f2a40 45%,#252a3b 100%)"></div>
<div class="sep" style="width:770px;background:#5a3552"></div>
<div class="ttl">Enumerate Domain Users with PowerView</div>
<div class="code"># Drop PowerShell&#x27;s security and import the PowerV
iew module
Set-ExecutionPolicy Bypass -Scope Process -Force
Import-Module .\PowerView.ps1

# Retrieve all the domain users and their groups</div>
<div class="run" style="left:614px;bottom:30px"><svg width="22" height="24" viewBox="0 0 22 24"><path d="M3.5 4 L17.5 12 L3.5 20 Z" fill="#94a3b8" stroke="#94a3b8" stroke-width="4" stroke-linejoin="round"/></svg><span>RUN</span></div>
<div class="act">
<svg style="left:16px;top:18.6px" width="27" height="27" viewBox="0 0 24 24" fill="none" stroke="url(#gTeal)" stroke-width="1.9" stroke-linecap="round" stroke-linejoin="round"><path d="M15 3h6v6"/><path d="M9 21H3v-6"/><path d="M21 3l-7 7"/><path d="M3 21l7-7"/></svg>
<svg style="left:16.9px;top:76.8px" width="26.4" height="26.4" viewBox="0 0 24 24" fill="none" stroke="url(#gCopy)" stroke-width="1.9" stroke-linecap="round" stroke-linejoin="round"><rect x="8" y="8" width="14" height="14" rx="2"/><path d="M4 16c-1.1 0-2-.9-2-2V4c0-1.1.9-2 2-2h10c1.1 0 2 .9 2 2"/></svg>
<svg style="left:16.9px;top:134.4px" width="26.4" height="26.4" viewBox="0 0 24 24" fill="none" stroke="url(#gNet)" stroke-width="1.9" stroke-linecap="round" stroke-linejoin="round"><rect x="16" y="16" width="6" height="6" rx="1"/><rect x="2" y="16" width="6" height="6" rx="1"/><rect x="9" y="2" width="6" height="6" rx="1"/><path d="M5 16v-3a1 1 0 0 1 1-1h12a1 1 0 0 1 1 1v3"/><path d="M12 12V8"/></svg>
<svg style="left:16.5px;bottom:16.9px" width="26.8" height="26.8" viewBox="0 0 24 24" fill="none" stroke="url(#gPen)" stroke-width="1.9" stroke-linecap="round" stroke-linejoin="round"><path d="M17 3a2.85 2.83 0 1 1 4 4L7.5 20.5 2 22l1.5-5.5Z"/></svg>
</div>
</div>
<div class="card" style="left:894px;top:388px;width:841px;height:279px;border-left:7px solid #4f83e6">
<div class="hdr" style="width:771px;background:linear-gradient(100deg,#2c3f66 0%,#263556 45%,#222a3c 100%)"></div>
<div class="sep" style="width:771px;background:#2f4d7a"></div>
<div class="ttl">Enumerate Domain Computers via LDAP (PowerView)</div>
<div class="code">PS&gt; Import-Module .\PowerView.ps1
PS&gt; Get-NetComputer | select operatingsystem,opera
tingsystemversion</div>
<div class="run" style="left:615px;bottom:30px"><svg width="22" height="24" viewBox="0 0 22 24"><path d="M3.5 4 L17.5 12 L3.5 20 Z" fill="#94a3b8" stroke="#94a3b8" stroke-width="4" stroke-linejoin="round"/></svg><span>RUN</span></div>
<div class="act">
<svg style="left:16px;top:18.6px" width="27" height="27" viewBox="0 0 24 24" fill="none" stroke="url(#gTeal)" stroke-width="1.9" stroke-linecap="round" stroke-linejoin="round"><path d="M15 3h6v6"/><path d="M9 21H3v-6"/><path d="M21 3l-7 7"/><path d="M3 21l7-7"/></svg>
<svg style="left:16.9px;top:76.8px" width="26.4" height="26.4" viewBox="0 0 24 24" fill="none" stroke="url(#gCopy)" stroke-width="1.9" stroke-linecap="round" stroke-linejoin="round"><rect x="8" y="8" width="14" height="14" rx="2"/><path d="M4 16c-1.1 0-2-.9-2-2V4c0-1.1.9-2 2-2h10c1.1 0 2 .9 2 2"/></svg>
<svg style="left:16.9px;top:134.4px" width="26.4" height="26.4" viewBox="0 0 24 24" fill="none" stroke="url(#gNet)" stroke-width="1.9" stroke-linecap="round" stroke-linejoin="round"><rect x="16" y="16" width="6" height="6" rx="1"/><rect x="2" y="16" width="6" height="6" rx="1"/><rect x="9" y="2" width="6" height="6" rx="1"/><path d="M5 16v-3a1 1 0 0 1 1-1h12a1 1 0 0 1 1 1v3"/><path d="M12 12V8"/></svg>
<svg style="left:16.5px;bottom:16.9px" width="26.8" height="26.8" viewBox="0 0 24 24" fill="none" stroke="url(#gPen)" stroke-width="1.9" stroke-linecap="round" stroke-linejoin="round"><path d="M17 3a2.85 2.83 0 1 1 4 4L7.5 20.5 2 22l1.5-5.5Z"/></svg>
</div>
</div>
<div class="card" style="left:32px;top:755.5px;width:409px;height:311.5px;border-left:7px solid #4f83e6">
<div class="hdr" style="width:339px;background:linear-gradient(100deg,#2c3f66 0%,#263556 45%,#222a3c 100%)"></div>
<div class="sep" style="width:339px;background:#2f4d7a"></div>
<div class="ttl">Enumerate Gro...</div>
<div class="code">PS&gt; Import-Module .\P
owerView.ps1
PS&gt; Get-NetGroupMembe
r</div>
<div class="run" style="left:183px;bottom:30px"><svg width="22" height="24" viewBox="0 0 22 24"><path d="M3.5 4 L17.5 12 L3.5 20 Z" fill="#94a3b8" stroke="#94a3b8" stroke-width="4" stroke-linejoin="round"/></svg><span>RUN</span></div>
<div class="act">
<svg style="left:16px;top:18.6px" width="27" height="27" viewBox="0 0 24 24" fill="none" stroke="url(#gTeal)" stroke-width="1.9" stroke-linecap="round" stroke-linejoin="round"><path d="M15 3h6v6"/><path d="M9 21H3v-6"/><path d="M21 3l-7 7"/><path d="M3 21l7-7"/></svg>
<svg style="left:16.9px;top:76.8px" width="26.4" height="26.4" viewBox="0 0 24 24" fill="none" stroke="url(#gCopy)" stroke-width="1.9" stroke-linecap="round" stroke-linejoin="round"><rect x="8" y="8" width="14" height="14" rx="2"/><path d="M4 16c-1.1 0-2-.9-2-2V4c0-1.1.9-2 2-2h10c1.1 0 2 .9 2 2"/></svg>
<svg style="left:16.9px;top:134.4px" width="26.4" height="26.4" viewBox="0 0 24 24" fill="none" stroke="url(#gNet)" stroke-width="1.9" stroke-linecap="round" stroke-linejoin="round"><rect x="16" y="16" width="6" height="6" rx="1"/><rect x="2" y="16" width="6" height="6" rx="1"/><rect x="9" y="2" width="6" height="6" rx="1"/><path d="M5 16v-3a1 1 0 0 1 1-1h12a1 1 0 0 1 1 1v3"/><path d="M12 12V8"/></svg>
<svg style="left:16.5px;bottom:16.9px" width="26.8" height="26.8" viewBox="0 0 24 24" fill="none" stroke="url(#gPen)" stroke-width="1.9" stroke-linecap="round" stroke-linejoin="round"><path d="M17 3a2.85 2.83 0 1 1 4 4L7.5 20.5 2 22l1.5-5.5Z"/></svg>
</div>
</div>
<div class="card" style="left:463px;top:755.5px;width:841px;height:279.5px;border-left:7px solid #4f83e6">
<div class="hdr" style="width:771px;background:linear-gradient(100deg,#2c3f66 0%,#263556 45%,#222a3c 100%)"></div>
<div class="sep" style="width:771px;background:#2f4d7a"></div>
<div class="ttl">Enumerate Group Policy Objects (PowerView)</div>
<div class="code">PS&gt; Import-Module .\PowerView.ps1
PS&gt; Get-NetGPO
PS&gt; Get-NetGPO | select displayname, whenchanged</div>
<div class="run" style="left:615px;bottom:30px"><svg width="22" height="24" viewBox="0 0 22 24"><path d="M3.5 4 L17.5 12 L3.5 20 Z" fill="#94a3b8" stroke="#94a3b8" stroke-width="4" stroke-linejoin="round"/></svg><span>RUN</span></div>
<div class="act">
<svg style="left:16px;top:18.6px" width="27" height="27" viewBox="0 0 24 24" fill="none" stroke="url(#gTeal)" stroke-width="1.9" stroke-linecap="round" stroke-linejoin="round"><path d="M15 3h6v6"/><path d="M9 21H3v-6"/><path d="M21 3l-7 7"/><path d="M3 21l7-7"/></svg>
<svg style="left:16.9px;top:76.8px" width="26.4" height="26.4" viewBox="0 0 24 24" fill="none" stroke="url(#gCopy)" stroke-width="1.9" stroke-linecap="round" stroke-linejoin="round"><rect x="8" y="8" width="14" height="14" rx="2"/><path d="M4 16c-1.1 0-2-.9-2-2V4c0-1.1.9-2 2-2h10c1.1 0 2 .9 2 2"/></svg>
<svg style="left:16.9px;top:134.4px" width="26.4" height="26.4" viewBox="0 0 24 24" fill="none" stroke="url(#gNet)" stroke-width="1.9" stroke-linecap="round" stroke-linejoin="round"><rect x="16" y="16" width="6" height="6" rx="1"/><rect x="2" y="16" width="6" height="6" rx="1"/><rect x="9" y="2" width="6" height="6" rx="1"/><path d="M5 16v-3a1 1 0 0 1 1-1h12a1 1 0 0 1 1 1v3"/><path d="M12 12V8"/></svg>
<svg style="left:16.5px;bottom:16.9px" width="26.8" height="26.8" viewBox="0 0 24 24" fill="none" stroke="url(#gPen)" stroke-width="1.9" stroke-linecap="round" stroke-linejoin="round"><path d="M17 3a2.85 2.83 0 1 1 4 4L7.5 20.5 2 22l1.5-5.5Z"/></svg>
</div>
</div>
<div class="card" style="left:1326px;top:755.5px;width:409px;height:246px;border-left:7px solid #3e2a2a">
<div class="hdr" style="width:339px;background:linear-gradient(100deg,#262a38,#232838)"></div>
<div class="sep" style="width:339px;background:#2e2a33"></div>
<div class="ttl">PowerShell Fix Colo...</div>
<div class="code">Remove-Module PSReadL
ine</div>
<div class="run" style="left:183px;bottom:30px"><svg width="22" height="24" viewBox="0 0 22 24"><path d="M3.5 4 L17.5 12 L3.5 20 Z" fill="#94a3b8" stroke="#94a3b8" stroke-width="4" stroke-linejoin="round"/></svg><span>RUN</span></div>
<div class="act">
<svg style="left:16px;top:18.6px" width="27" height="27" viewBox="0 0 24 24" fill="none" stroke="url(#gTeal)" stroke-width="1.9" stroke-linecap="round" stroke-linejoin="round"><path d="M15 3h6v6"/><path d="M9 21H3v-6"/><path d="M21 3l-7 7"/><path d="M3 21l7-7"/></svg>
<svg style="left:16.9px;top:76.8px" width="26.4" height="26.4" viewBox="0 0 24 24" fill="none" stroke="url(#gCopy)" stroke-width="1.9" stroke-linecap="round" stroke-linejoin="round"><rect x="8" y="8" width="14" height="14" rx="2"/><path d="M4 16c-1.1 0-2-.9-2-2V4c0-1.1.9-2 2-2h10c1.1 0 2 .9 2 2"/></svg>
<svg style="left:16.9px;top:134.4px" width="26.4" height="26.4" viewBox="0 0 24 24" fill="none" stroke="url(#gNet)" stroke-width="1.9" stroke-linecap="round" stroke-linejoin="round"><rect x="16" y="16" width="6" height="6" rx="1"/><rect x="2" y="16" width="6" height="6" rx="1"/><rect x="9" y="2" width="6" height="6" rx="1"/><path d="M5 16v-3a1 1 0 0 1 1-1h12a1 1 0 0 1 1 1v3"/><path d="M12 12V8"/></svg>
<svg style="left:16.5px;bottom:16.9px" width="26.8" height="26.8" viewBox="0 0 24 24" fill="none" stroke="url(#gPen)" stroke-width="1.9" stroke-linecap="round" stroke-linejoin="round"><path d="M17 3a2.85 2.83 0 1 1 4 4L7.5 20.5 2 22l1.5-5.5Z"/></svg>
</div>
</div>
<div class="card" style="left:32px;top:1090px;width:840px;height:247px;border-left:7px solid #4f83e6">
<div class="hdr" style="width:770px;background:linear-gradient(100deg,#2c3f66 0%,#263556 45%,#222a3c 100%)"></div>
<div class="sep" style="width:770px;background:#2f4d7a"></div>
<div class="ttl">Enumerate Shares with PowerView</div>
<div class="code">PS&gt; Import-Module .\PowerView.ps1
PS&gt; Get-NetShare -ComputerName Spiderman</div>
<div class="run" style="left:614px;bottom:30px"><svg width="22" height="24" viewBox="0 0 22 24"><path d="M3.5 4 L17.5 12 L3.5 20 Z" fill="#94a3b8" stroke="#94a3b8" stroke-width="4" stroke-linejoin="round"/></svg><span>RUN</span></div>
<div class="act">
<svg style="left:16px;top:18.6px" width="27" height="27" viewBox="0 0 24 24" fill="none" stroke="url(#gTeal)" stroke-width="1.9" stroke-linecap="round" stroke-linejoin="round"><path d="M15 3h6v6"/><path d="M9 21H3v-6"/><path d="M21 3l-7 7"/><path d="M3 21l7-7"/></svg>
<svg style="left:16.9px;top:76.8px" width="26.4" height="26.4" viewBox="0 0 24 24" fill="none" stroke="url(#gCopy)" stroke-width="1.9" stroke-linecap="round" stroke-linejoin="round"><rect x="8" y="8" width="14" height="14" rx="2"/><path d="M4 16c-1.1 0-2-.9-2-2V4c0-1.1.9-2 2-2h10c1.1 0 2 .9 2 2"/></svg>
<svg style="left:16.9px;top:134.4px" width="26.4" height="26.4" viewBox="0 0 24 24" fill="none" stroke="url(#gNet)" stroke-width="1.9" stroke-linecap="round" stroke-linejoin="round"><rect x="16" y="16" width="6" height="6" rx="1"/><rect x="2" y="16" width="6" height="6" rx="1"/><rect x="9" y="2" width="6" height="6" rx="1"/><path d="M5 16v-3a1 1 0 0 1 1-1h12a1 1 0 0 1 1 1v3"/><path d="M12 12V8"/></svg>
<svg style="left:16.5px;bottom:16.9px" width="26.8" height="26.8" viewBox="0 0 24 24" fill="none" stroke="url(#gPen)" stroke-width="1.9" stroke-linecap="round" stroke-linejoin="round"><path d="M17 3a2.85 2.83 0 1 1 4 4L7.5 20.5 2 22l1.5-5.5Z"/></svg>
</div>
</div>
<div class="card" style="left:894px;top:1090px;width:841px;height:344px;border-left:7px solid #4f83e6">
<div class="hdr" style="width:771px;background:linear-gradient(100deg,#2c3f66 0%,#263556 45%,#222a3c 100%)"></div>
<div class="sep" style="width:771px;background:#2f4d7a"></div>
<div class="ttl">SharpHound Collection &amp; BloodHound Analysis</div>
<div class="code"># Data Collection with SharpHound (zip file)

PS&gt;  Import-Module .\Sharphound.ps1
PS&gt;  Get-Help Invoke-BloodHound
PS&gt;  Invoke-BloodHound -CollectionMethod All -Out…
utDirectory C:\Users\stephanie\Desktop\ -OutputPre
fix &quot;corp audit&quot;</div>
<div class="run" style="left:615px;bottom:30px"><svg width="22" height="24" viewBox="0 0 22 24"><path d="M3.5 4 L17.5 12 L3.5 20 Z" fill="#94a3b8" stroke="#94a3b8" stroke-width="4" stroke-linejoin="round"/></svg><span>RUN</span></div>
<div class="act">
<svg style="left:16px;top:18.6px" width="27" height="27" viewBox="0 0 24 24" fill="none" stroke="url(#gTeal)" stroke-width="1.9" stroke-linecap="round" stroke-linejoin="round"><path d="M15 3h6v6"/><path d="M9 21H3v-6"/><path d="M21 3l-7 7"/><path d="M3 21l7-7"/></svg>
<svg style="left:16.9px;top:76.8px" width="26.4" height="26.4" viewBox="0 0 24 24" fill="none" stroke="url(#gCopy)" stroke-width="1.9" stroke-linecap="round" stroke-linejoin="round"><rect x="8" y="8" width="14" height="14" rx="2"/><path d="M4 16c-1.1 0-2-.9-2-2V4c0-1.1.9-2 2-2h10c1.1 0 2 .9 2 2"/></svg>
<svg style="left:16.9px;top:134.4px" width="26.4" height="26.4" viewBox="0 0 24 24" fill="none" stroke="url(#gNet)" stroke-width="1.9" stroke-linecap="round" stroke-linejoin="round"><rect x="16" y="16" width="6" height="6" rx="1"/><rect x="2" y="16" width="6" height="6" rx="1"/><rect x="9" y="2" width="6" height="6" rx="1"/><path d="M5 16v-3a1 1 0 0 1 1-1h12a1 1 0 0 1 1 1v3"/><path d="M12 12V8"/></svg>
<svg style="left:16.5px;bottom:16.9px" width="26.8" height="26.8" viewBox="0 0 24 24" fill="none" stroke="url(#gPen)" stroke-width="1.9" stroke-linecap="round" stroke-linejoin="round"><path d="M17 3a2.85 2.83 0 1 1 4 4L7.5 20.5 2 22l1.5-5.5Z"/></svg>
</div>
</div>
<div class="card" style="left:32px;top:1457px;width:840px;height:320px;border-left:7px solid #4f83e6">
<div class="hdr" style="width:770px;background:linear-gradient(100deg,#2c3f66 0%,#263556 45%,#222a3c 100%)"></div>
<div class="sep" style="width:770px;background:#2f4d7a"></div>
<div class="ttl">Local User Environment Enumeration</div>
<div class="code">whoami
whoami /user
whoami /groups</div>
<div class="run" style="left:614px;bottom:30px"><svg width="22" height="24" viewBox="0 0 22 24"><path d="M3.5 4 L17.5 12 L3.5 20 Z" fill="#94a3b8" stroke="#94a3b8" stroke-width="4" stroke-linejoin="round"/></svg><span>RUN</span></div>
<div class="act">
<svg style="left:16px;top:18.6px" width="27" height="27" viewBox="0 0 24 24" fill="none" stroke="url(#gTeal)" stroke-width="1.9" stroke-linecap="round" stroke-linejoin="round"><path d="M15 3h6v6"/><path d="M9 21H3v-6"/><path d="M21 3l-7 7"/><path d="M3 21l7-7"/></svg>
<svg style="left:16.9px;top:76.8px" width="26.4" height="26.4" viewBox="0 0 24 24" fill="none" stroke="url(#gCopy)" stroke-width="1.9" stroke-linecap="round" stroke-linejoin="round"><rect x="8" y="8" width="14" height="14" rx="2"/><path d="M4 16c-1.1 0-2-.9-2-2V4c0-1.1.9-2 2-2h10c1.1 0 2 .9 2 2"/></svg>
<svg style="left:16.9px;top:134.4px" width="26.4" height="26.4" viewBox="0 0 24 24" fill="none" stroke="url(#gNet)" stroke-width="1.9" stroke-linecap="round" stroke-linejoin="round"><rect x="16" y="16" width="6" height="6" rx="1"/><rect x="2" y="16" width="6" height="6" rx="1"/><rect x="9" y="2" width="6" height="6" rx="1"/><path d="M5 16v-3a1 1 0 0 1 1-1h12a1 1 0 0 1 1 1v3"/><path d="M12 12V8"/></svg>
<svg style="left:16.5px;bottom:16.9px" width="26.8" height="26.8" viewBox="0 0 24 24" fill="none" stroke="url(#gPen)" stroke-width="1.9" stroke-linecap="round" stroke-linejoin="round"><path d="M17 3a2.85 2.83 0 1 1 4 4L7.5 20.5 2 22l1.5-5.5Z"/></svg>
</div>
</div>
<div class="card" style="left:894px;top:1457px;width:841px;height:320px;border-left:7px solid #1f2638">
<div class="hdr" style="width:771px;background:linear-gradient(100deg,#2f435c 0%,#2c3c55 45%,#242c3d 100%)"></div>
<div class="sep" style="width:771px;background:#3b5676"></div>
<div class="ttl">Domain Join and Machine Role Enum</div>
<div class="code">systeminfo | findstr /B /C:&quot;Host Name&quot; /C:&quot;Domain&quot;
/C:&quot;Logon Server&quot;
wmic computersystem get name,domain,partofdomain,d</div>
<div class="run" style="left:615px;bottom:30px"><svg width="22" height="24" viewBox="0 0 22 24"><path d="M3.5 4 L17.5 12 L3.5 20 Z" fill="#94a3b8" stroke="#94a3b8" stroke-width="4" stroke-linejoin="round"/></svg><span>RUN</span></div>
<div class="act">
<svg style="left:16px;top:18.6px" width="27" height="27" viewBox="0 0 24 24" fill="none" stroke="url(#gTeal)" stroke-width="1.9" stroke-linecap="round" stroke-linejoin="round"><path d="M15 3h6v6"/><path d="M9 21H3v-6"/><path d="M21 3l-7 7"/><path d="M3 21l7-7"/></svg>
<svg style="left:16.9px;top:76.8px" width="26.4" height="26.4" viewBox="0 0 24 24" fill="none" stroke="url(#gCopy)" stroke-width="1.9" stroke-linecap="round" stroke-linejoin="round"><rect x="8" y="8" width="14" height="14" rx="2"/><path d="M4 16c-1.1 0-2-.9-2-2V4c0-1.1.9-2 2-2h10c1.1 0 2 .9 2 2"/></svg>
<svg style="left:16.9px;top:134.4px" width="26.4" height="26.4" viewBox="0 0 24 24" fill="none" stroke="url(#gNet)" stroke-width="1.9" stroke-linecap="round" stroke-linejoin="round"><rect x="16" y="16" width="6" height="6" rx="1"/><rect x="2" y="16" width="6" height="6" rx="1"/><rect x="9" y="2" width="6" height="6" rx="1"/><path d="M5 16v-3a1 1 0 0 1 1-1h12a1 1 0 0 1 1 1v3"/><path d="M12 12V8"/></svg>
<svg style="left:16.5px;bottom:16.9px" width="26.8" height="26.8" viewBox="0 0 24 24" fill="none" stroke="url(#gPen)" stroke-width="1.9" stroke-linecap="round" stroke-linejoin="round"><path d="M17 3a2.85 2.83 0 1 1 4 4L7.5 20.5 2 22l1.5-5.5Z"/></svg>
</div>
</div>
<div class="abs" style="left:0;top:1651px;width:1762px;height:17px;background:#111726"></div>
<div class="abs" style="left:1748px;top:394px;width:11px;height:173px;border-radius:6px;background:#4a5466"></div></div><div class="ov"></div>
<div class="hl"></div>
<div class="it" style="top:10px;color:#8c8f96">Select Runbook...</div>
<svg class="abs" style="left:20px;top:73px" width="22" height="24" viewBox="0 0 22 24" fill="none" stroke="#fff" stroke-width="2.7" stroke-linecap="round" stroke-linejoin="round"><path d="M2.5 13.5 L8 20.5 L19.5 3.5"/></svg>
<div class="it" style="top:60px;color:#ffffff">active-directory</div>
<div class="it" style="top:110px;color:#1d1d1f">bug-bounty-recon</div>
<div class="it" style="top:160px;color:#1d1d1f">fortigate-fw</div>
<div class="it" style="top:210px;color:#1d1d1f">linux-privesc</div>
<div class="it" style="top:260px;color:#1d1d1f">oscp-cpts</div>
<div class="it" style="top:310px;color:#1d1d1f">osint-ops</div>
<div class="it" style="top:360px;color:#1d1d1f">paloalto-fw</div>
<div class="it" style="top:410px;color:#1d1d1f">password-cracking</div>
<div class="it" style="top:460px;color:#1d1d1f">pivoting-tunneling</div>
<div class="it" style="top:510px;color:#1d1d1f">reverse-shells</div>
<div class="it" style="top:560px;color:#1d1d1f">web-app-pentest</div>
<div class="it" style="top:610px;color:#1d1d1f">windows-privesc</div>
</div></body></html>
